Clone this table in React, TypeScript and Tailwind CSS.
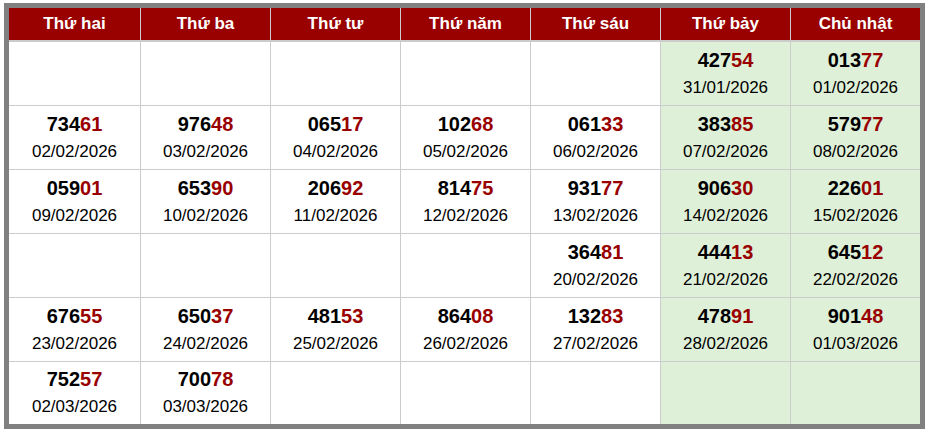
import React from 'react';

type Draw = { num: string; date: string } | null;

const days = ['Thứ hai', 'Thứ ba', 'Thứ tư', 'Thứ năm', 'Thứ sáu', 'Thứ bảy', 'Chủ nhật'];

const rows: Draw[][] = [
  [null, null, null, null, null, { num: '42754', date: '31/01/2026' }, { num: '01377', date: '01/02/2026' }],
  [
    { num: '73461', date: '02/02/2026' },
    { num: '97648', date: '03/02/2026' },
    { num: '06517', date: '04/02/2026' },
    { num: '10268', date: '05/02/2026' },
    { num: '06133', date: '06/02/2026' },
    { num: '38385', date: '07/02/2026' },
    { num: '57977', date: '08/02/2026' },
  ],
  [
    { num: '05901', date: '09/02/2026' },
    { num: '65390', date: '10/02/2026' },
    { num: '20692', date: '11/02/2026' },
    { num: '81475', date: '12/02/2026' },
    { num: '93177', date: '13/02/2026' },
    { num: '90630', date: '14/02/2026' },
    { num: '22601', date: '15/02/2026' },
  ],
  [null, null, null, null, { num: '36481', date: '20/02/2026' }, { num: '44413', date: '21/02/2026' }, { num: '64512', date: '22/02/2026' }],
  [
    { num: '67655', date: '23/02/2026' },
    { num: '65037', date: '24/02/2026' },
    { num: '48153', date: '25/02/2026' },
    { num: '86408', date: '26/02/2026' },
    { num: '13283', date: '27/02/2026' },
    { num: '47891', date: '28/02/2026' },
    { num: '90148', date: '01/03/2026' },
  ],
  [{ num: '75257', date: '02/03/2026' }, { num: '70078', date: '03/03/2026' }, null, null, null, null, null],
];

const Cell: React.FC<{ draw: Draw; weekend: boolean; last: boolean }> = ({ draw, weekend, last }) => (
  <div
    className={`flex flex-col items-center justify-center ${last ? 'h-[62px]' : 'h-[63px]'} ${
      weekend ? 'bg-[#dff0d8]' : 'bg-white'
    }`}
  >
    {draw && (
      <>
        <div className="text-[20px] leading-[28px] font-bold text-black">
          {draw.num.slice(0, 3)}
          <span className="text-[#990000]">{draw.num.slice(3)}</span>
        </div>
        <div className="text-[17px] leading-[28px] text-black">{draw.date}</div>
      </>
    )}
  </div>
);

export default function App() {
  return (
    <div className="bg-white w-[931px] h-[434px] pt-[3px] pl-[4px] font-['Liberation_Sans',Arial,sans-serif]">
      <div className="w-[921px] border-[5px] border-[#808080]">
        <div className="grid grid-cols-[131px_repeat(6,129px)] gap-px bg-[#cccccc]">
          {days.map((d) => (
            <div
              key={d}
              className="h-[33px] bg-[#990000] border-b border-[#cccccc] text-white font-bold text-[17px] flex items-center justify-center"
            >
              <span className="-mt-px">{d}</span>
            </div>
          ))}
          {rows.map((row, ri) =>
            row.map((draw, ci) => (
              <Cell key={`${ri}-${ci}`} draw={draw} weekend={ci >= 5} last={ri === rows.length - 1} />
            ))
          )}
        </div>
      </div>
    </div>
  );
}
